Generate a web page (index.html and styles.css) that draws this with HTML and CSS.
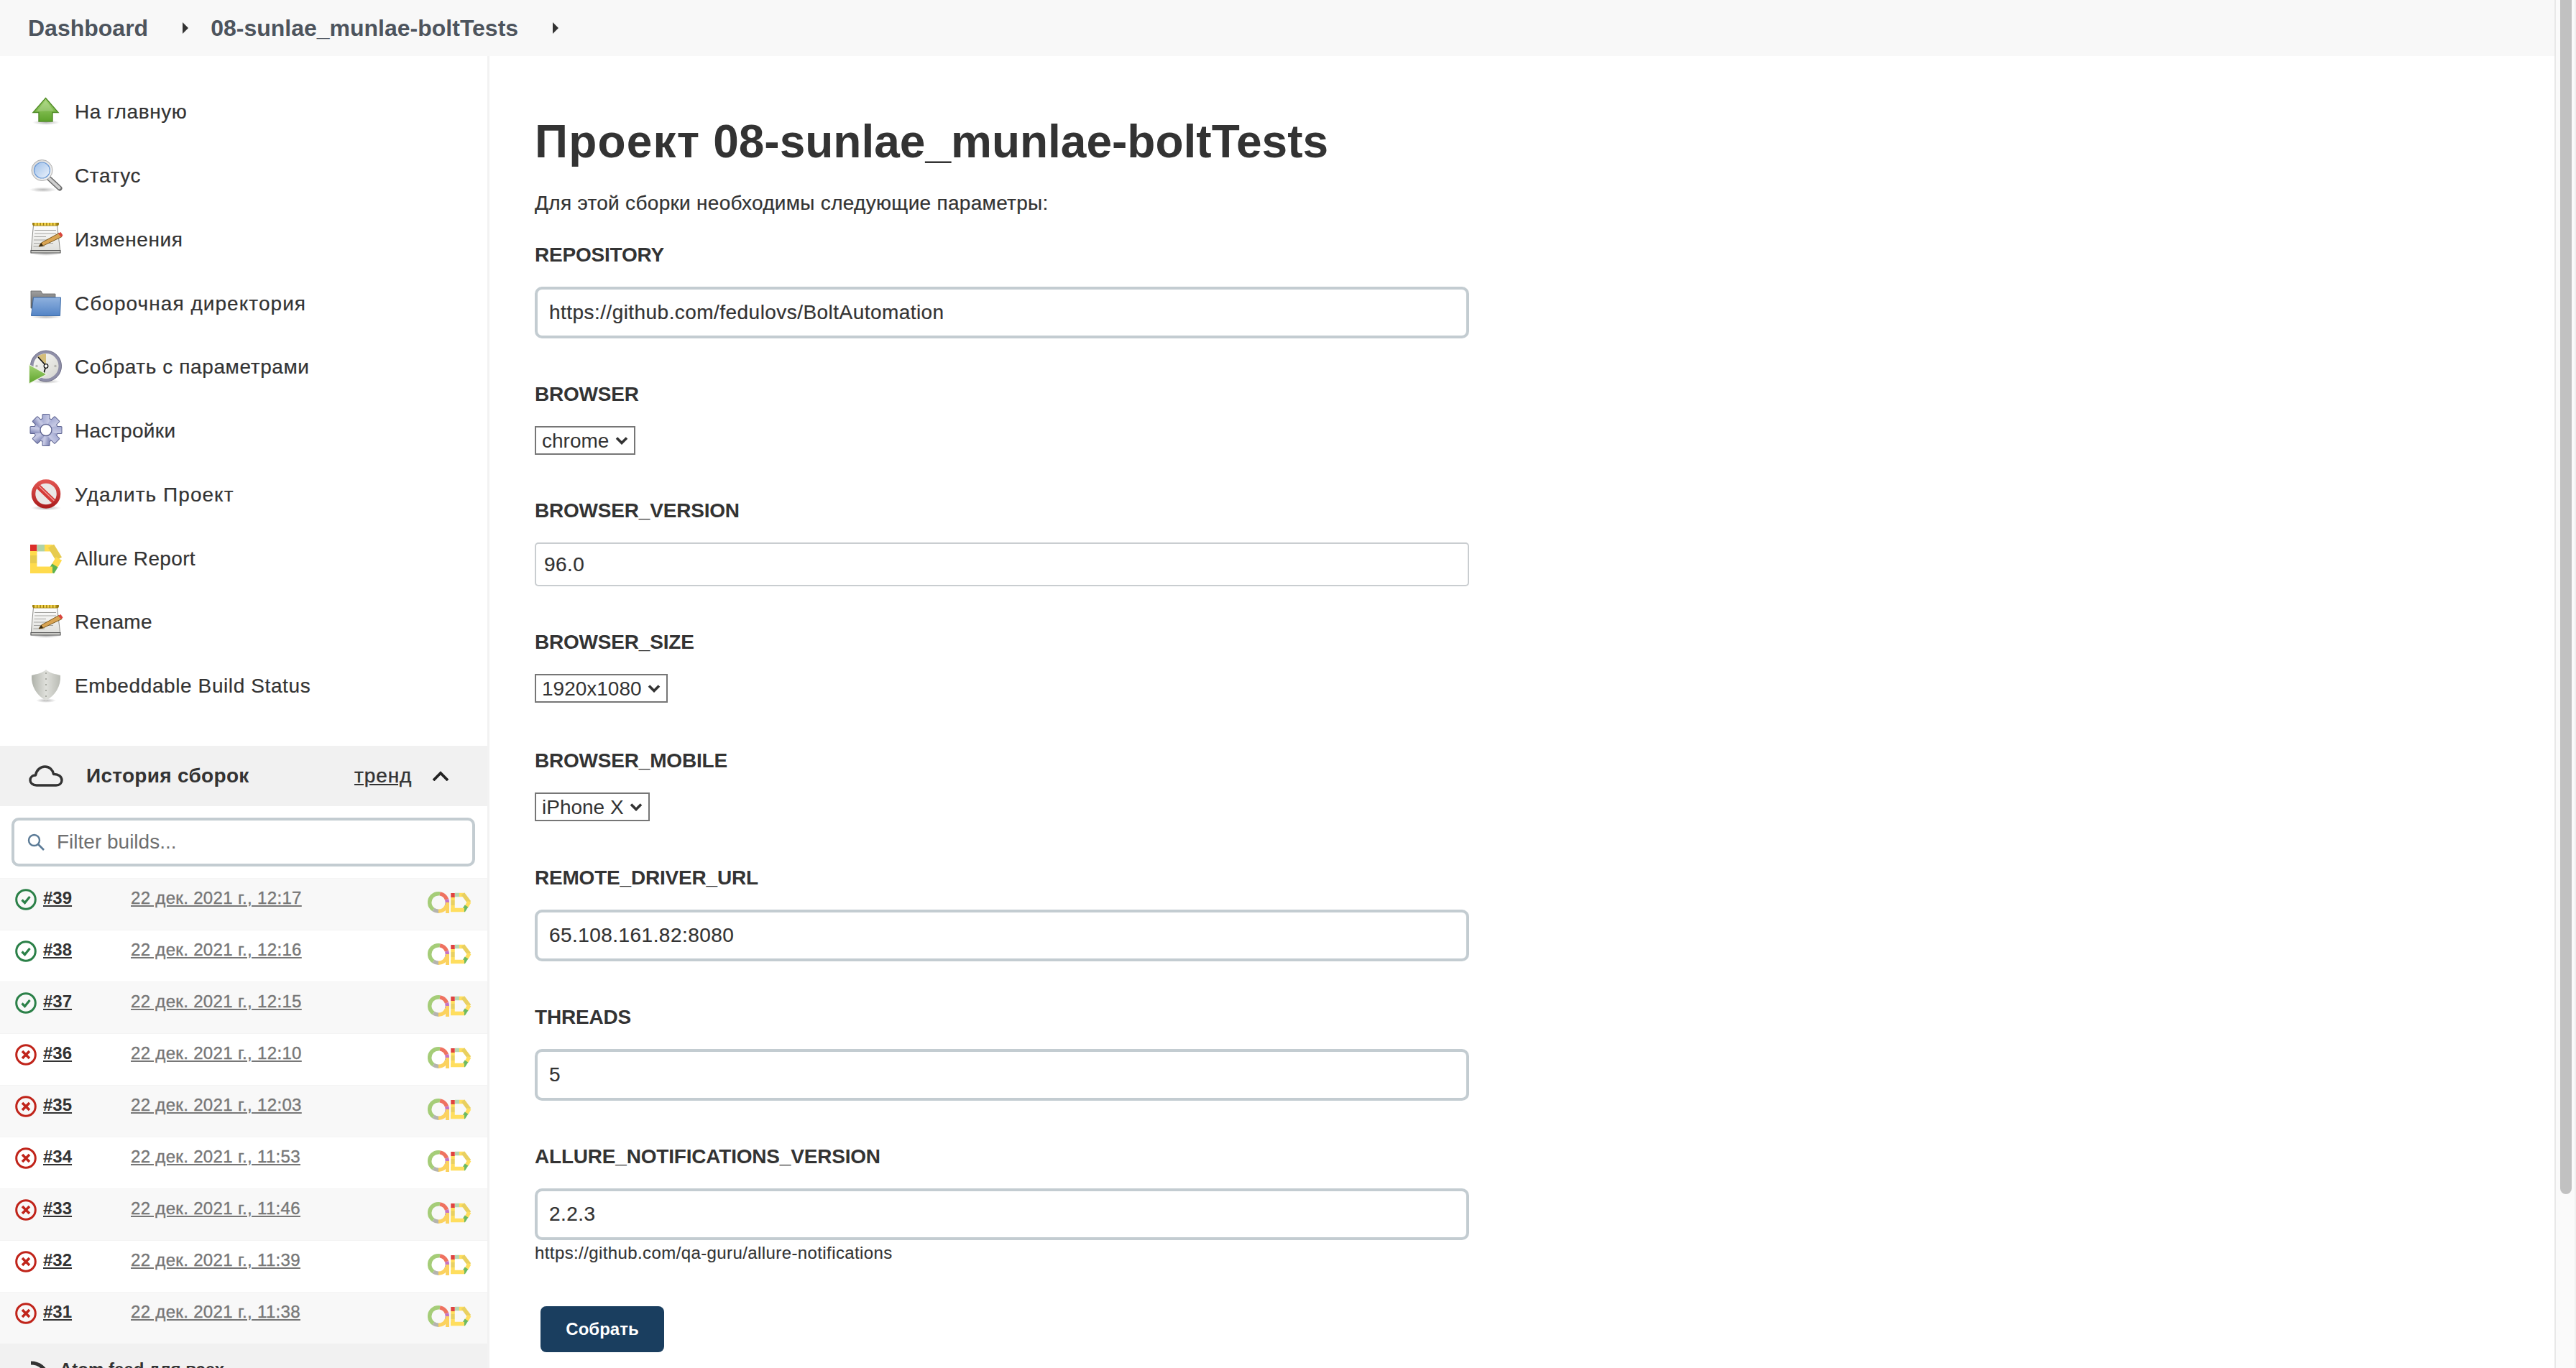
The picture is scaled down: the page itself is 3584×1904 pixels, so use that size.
FILE: index.html
```html
<!DOCTYPE html>
<html lang="ru">
<head>
<meta charset="utf-8">
<title>08-sunlae_munlae-boltTests</title>
<link rel="stylesheet" href="styles.css">
</head>
<body>
<svg class="defs" aria-hidden="true">
  <defs>
    <linearGradient id="gGreen" x1="0" y1="0" x2="0" y2="1"><stop offset="0" stop-color="#a4d474"/><stop offset="1" stop-color="#5da32b"/></linearGradient>
    <linearGradient id="gLens" x1="0" y1="0" x2="1" y2="1"><stop offset="0" stop-color="#9dbfe9"/><stop offset="1" stop-color="#eef4fc"/></linearGradient>
    <linearGradient id="gRim" x1="0" y1="0" x2="1" y2="1"><stop offset="0" stop-color="#d8d8d8"/><stop offset="1" stop-color="#f6f6f6"/></linearGradient>
    <linearGradient id="gPaper" x1="0" y1="0" x2="0" y2="1"><stop offset="0" stop-color="#ffffff"/><stop offset="1" stop-color="#dcdcd8"/></linearGradient>
    <linearGradient id="gFolder" x1="0" y1="0" x2="0" y2="1"><stop offset="0" stop-color="#8fb1de"/><stop offset="1" stop-color="#5384c6"/></linearGradient>
    <linearGradient id="gFolderBack" x1="0" y1="0" x2="0" y2="1"><stop offset="0" stop-color="#a0a0a0"/><stop offset="1" stop-color="#5c5c5c"/></linearGradient>
    <linearGradient id="gFace" x1="0" y1="0" x2="1" y2="1"><stop offset="0" stop-color="#fbfbf8"/><stop offset="1" stop-color="#d4d4cf"/></linearGradient>
    <linearGradient id="gGear" x1="0" y1="0" x2="1" y2="1"><stop offset="0" stop-color="#a5abd3"/><stop offset="0.55" stop-color="#c6c9e4"/><stop offset="1" stop-color="#7d83b4"/></linearGradient>
    <linearGradient id="gStop" x1="0" y1="0" x2="0" y2="1"><stop offset="0" stop-color="#e0534f"/><stop offset="1" stop-color="#ad1f1f"/></linearGradient>
    <linearGradient id="gShield" x1="0" y1="0" x2="1" y2="0"><stop offset="0" stop-color="#aeb1a9"/><stop offset="0.5" stop-color="#dfe0db"/><stop offset="1" stop-color="#b9bbb4"/></linearGradient>
    <radialGradient id="gShadow"><stop offset="0" stop-color="#000" stop-opacity=".28"/><stop offset="1" stop-color="#000" stop-opacity="0"/></radialGradient>

    <symbol id="notepad" viewBox="0 0 48 48">
      <ellipse cx="24" cy="43" rx="21" ry="3" fill="url(#gShadow)"/>
      <path d="M6.500 3.500H39.500L44 41.500H3Z" fill="url(#gPaper)" stroke="#8b8b87" stroke-width="1"/>
      <rect x="3" y="38.500" width="41" height="3.500" fill="#c9c9c5" stroke="#555" stroke-width="1"/>
      <path d="M8 10.500H38M8 15H38M7.500 19.500H24M7 24H36M7 28.500H34M6.500 33H22" stroke="#a3a3a0" stroke-width="1.100" fill="none"/>
      <path d="M8 1.500H39" stroke="#9a7c10" stroke-width="6" stroke-linecap="round"/>
      <path d="M8 1.500H39" stroke="#f0d04a" stroke-width="4.400" stroke-dasharray="3 1.400" fill="none"/>
      <path d="M14 33L17.500 28 42 14.500 46 19.500 20 32Z" fill="#d9a453" stroke="#7c5a1e" stroke-width="1"/>
      <path d="M14 33L17.500 28 20 32Z" fill="#3a2b12"/>
      <path d="M41 15L44.500 13 47.500 17.500 45 20Z" fill="#d9443c"/>
    </symbol>

    <symbol id="allure-d" viewBox="0 0 44 40" preserveAspectRatio="none">
      <g fill="none" stroke-width="9.500">
        <path d="M4.700 0V10" stroke="#db2f2a"/>
        <path d="M9.500 4.700H20" stroke="#aed3a9"/>
        <path d="M20 4.700H31" stroke="#ffdb4d"/>
        <path d="M29 2L40 20" stroke="#e7cb4f"/>
        <path d="M40 19.500L34 30" stroke="#ffdb4d"/>
        <path d="M34.500 29L29 38" stroke="#5db34f"/>
        <path d="M31 35.300H0" stroke="#ffdb4d"/>
        <path d="M4.700 9V15" stroke="#ffdb4d"/>
        <path d="M4.700 15V26" stroke="#e7cb4f"/>
        <path d="M4.700 26V31" stroke="#ffdb4d"/>
      </g>
    </symbol>

    <symbol id="allure-mini" viewBox="0 0 61 32">
      <g fill="none" stroke-width="5.500">
        <circle cx="15" cy="16" r="12.300" pathLength="360" stroke="#a5cd78" stroke-dasharray="155 205" stroke-dashoffset="-215" transform="rotate(-90 15 16)"/>
        <circle cx="15" cy="16" r="12.300" pathLength="360" stroke="#ef7260" stroke-dasharray="60 300" stroke-dashoffset="-10" transform="rotate(-90 15 16)"/>
        <circle cx="15" cy="16" r="12.300" pathLength="360" stroke="#c573c2" stroke-dasharray="40 320" stroke-dashoffset="-70" transform="rotate(-90 15 16)"/>
        <circle cx="15" cy="16" r="12.300" pathLength="360" stroke="#fbd25f" stroke-dasharray="70 290" stroke-dashoffset="-110" transform="rotate(-90 15 16)"/>
        <circle cx="15" cy="16" r="12.300" pathLength="360" stroke="#b4b4ae" stroke-dasharray="35 325" stroke-dashoffset="-180" transform="rotate(-90 15 16)"/>
        <path d="M27.500 16V31" stroke="#fbd25f" stroke-width="5"/>
        <g stroke-width="5.500" opacity=".9">
          <path d="M35 3V9" stroke="#db2f2a"/>
          <path d="M38 5.500H44" stroke="#aed3a9"/>
          <path d="M44 5.500H50" stroke="#ffdb4d"/>
          <path d="M49 4L58 16" stroke="#e7cb4f"/>
          <path d="M58 15L54 22" stroke="#ffdb4d"/>
          <path d="M54 21L49.500 28" stroke="#5db34f"/>
          <path d="M51 26.500H32" stroke="#ffdb4d"/>
          <path d="M35 9V13" stroke="#ffdb4d"/>
          <path d="M35 13V20" stroke="#e7cb4f"/>
          <path d="M35 20V25" stroke="#ffdb4d"/>
        </g>
      </g>
    </symbol>

    <symbol id="st-ok" viewBox="0 0 30 30">
      <circle cx="15" cy="15" r="13.300" fill="none" stroke="#2b8048" stroke-width="3"/>
      <path d="M9.500 15.500L13.500 19.500 20.500 11" fill="none" stroke="#2b8048" stroke-width="3.200"/>
    </symbol>
    <symbol id="st-fail" viewBox="0 0 30 30">
      <circle cx="15" cy="15" r="13.300" fill="none" stroke="#c0241a" stroke-width="3"/>
      <path d="M10 10L20 20M20 10L10 20" fill="none" stroke="#c0241a" stroke-width="3.600"/>
    </symbol>
  </defs>
</svg>

<div class="page">
  <header class="topbar">
    <a class="crumb">Dashboard</a>
    <span class="caret"></span>
    <a class="crumb">08-sunlae_munlae-boltTests</a>
    <span class="caret"></span>
  </header>

  <div class="layout">
    <aside class="sidebar">
      <nav class="tasks">
        <a class="task">
          <svg class="task-icon" viewBox="0 0 48 48"><ellipse cx="24" cy="38.500" rx="19" ry="3.500" fill="url(#gShadow)"/><path d="M23.500 4.500L41 24.500H33V37H14V24.500H6Z" fill="url(#gGreen)" stroke="#4f8a26" stroke-width="1.400"/><path d="M23.500 8L35 22.500H23C19 23 14 23 11 23Z" fill="#fff" opacity=".18"/></svg>
          <span>На главную</span>
        </a>
        <a class="task">
          <svg class="task-icon" viewBox="0 0 48 48"><ellipse cx="20" cy="43" rx="19" ry="3.500" fill="url(#gShadow)"/><path d="M28 27L43 41" stroke="#6d6d6d" stroke-width="7" stroke-linecap="round"/><path d="M29 28L42.500 40.500" stroke="#cfcfcf" stroke-width="4" stroke-linecap="round"/><circle cx="18.500" cy="16" r="14.500" fill="url(#gRim)" stroke="#a9a9a9" stroke-width="1"/><circle cx="18.500" cy="16" r="11" fill="url(#gLens)" stroke="#6b9ad6" stroke-width="1.200"/></svg>
          <span>Статус</span>
        </a>
        <a class="task">
          <svg class="task-icon"><use href="#notepad"/></svg>
          <span>Изменения</span>
        </a>
        <a class="task loose">
          <svg class="task-icon" viewBox="0 0 48 48"><ellipse cx="24" cy="42" rx="22" ry="3" fill="url(#gShadow)"/><path d="M3 6H17L19 10H37V30H3Z" fill="url(#gFolderBack)" stroke="#666" stroke-width=".8"/><path d="M6.500 15H44.500L43.500 40.500H3.500Z" fill="url(#gFolder)" stroke="#3f6da8" stroke-width="1"/></svg>
          <span>Сборочная директория</span>
        </a>
        <a class="task">
          <svg class="task-icon" viewBox="0 0 48 48"><ellipse cx="24" cy="44" rx="20" ry="3" fill="url(#gShadow)"/><circle cx="24" cy="22.500" r="21.500" fill="#8f8fa8" stroke="#6d6d86" stroke-width="1"/><circle cx="24" cy="22.500" r="17.500" fill="url(#gFace)"/><path d="M24 20L12 9.500 A 17 17 0 0 1 24 5.500Z" fill="#d4bd7a"/><path d="M24 22L13 10M24 22L20 36" stroke="#111" stroke-width="1.700" fill="none"/><circle cx="24" cy="22.500" r="2.800" fill="#fff" stroke="#111" stroke-width="1.300"/><circle cx="37" cy="22.500" r="1.700" fill="#b5b5b0"/><circle cx="11" cy="22.500" r="1.700" fill="#b5b5b0"/><path d="M.5 20.500L25 34 .5 47Z" fill="url(#gGreen)" stroke="#eef3e4" stroke-width="1.100"/></svg>
          <span>Собрать с параметрами</span>
        </a>
        <a class="task tight">
          <svg class="task-icon" viewBox="0 0 48 48">
            <g fill="#5f6592"><circle cx="24" cy="22.500" r="17"/><rect x="18.500" y="0" width="11" height="45" rx="1.500"/><rect x="18.500" y="0" width="11" height="45" rx="1.500" transform="rotate(45 24 22.500)"/><rect x="18.500" y="0" width="11" height="45" rx="1.500" transform="rotate(90 24 22.500)"/><rect x="18.500" y="0" width="11" height="45" rx="1.500" transform="rotate(135 24 22.500)"/></g>
            <g fill="url(#gGear)"><circle cx="24" cy="22.500" r="16"/><rect x="19.500" y="1" width="9" height="43" rx="1"/><rect x="19.500" y="1" width="9" height="43" rx="1" transform="rotate(45 24 22.500)"/><rect x="19.500" y="1" width="9" height="43" rx="1" transform="rotate(90 24 22.500)"/><rect x="19.500" y="1" width="9" height="43" rx="1" transform="rotate(135 24 22.500)"/></g>
            <circle cx="24" cy="22.500" r="8" fill="#fff" stroke="#5f6592" stroke-width="1.400"/>
          </svg>
          <span>Настройки</span>
        </a>
        <a class="task loose">
          <svg class="task-icon" viewBox="0 0 48 48"><ellipse cx="24" cy="42" rx="21" ry="3.500" fill="url(#gShadow)"/><circle cx="24" cy="22.500" r="17" fill="#ebe8e6"/><path d="M11 10L37 35" stroke="#d43a36" stroke-width="7"/><path d="M13 10.500L37 33.500" stroke="#f09a96" stroke-width="1.500"/><circle cx="24" cy="22.500" r="17.500" fill="none" stroke="url(#gStop)" stroke-width="5.500"/></svg>
          <span>Удалить Проект</span>
        </a>
        <a class="task tight">
          <svg class="task-icon" viewBox="0 0 48 48"><svg x="2" y="4" width="44" height="40"><use href="#allure-d"/></svg></svg>
          <span>Allure Report</span>
        </a>
        <a class="task tight">
          <svg class="task-icon"><use href="#notepad"/></svg>
          <span>Rename</span>
        </a>
        <a class="task">
          <svg class="task-icon" viewBox="0 0 48 48"><ellipse cx="24" cy="44" rx="14" ry="3" fill="url(#gShadow)"/><path d="M24 1C29 6 37 7 44 9C45 24 37 37 24 44C11 37 3 24 4 9C11 7 19 6 24 1Z" fill="url(#gShield)"/><path d="M24 5V40" stroke="#9c9e96" stroke-width="1.600" stroke-dasharray="2 6"/></svg>
          <span>Embeddable Build Status</span>
        </a>
      </nav>

      <section class="history">
        <div class="history-head">
          <svg class="cloud" viewBox="0 0 48 30"><path d="M11 28C5 28 2 24.500 2 21C2 17 5 14 9.500 14C10.500 7 16 2 22.500 2C29 2 33.500 6.500 34.500 12.500C41 12 46 16 46 21C46 25 43 28 38 28Z" fill="none" stroke="#333" stroke-width="3.400" stroke-linejoin="round"/></svg>
          <span class="history-title">История сборок</span>
          <a class="trend">тренд</a>
          <svg class="chevron" viewBox="0 0 24 14"><path d="M2 13L12 3 22 13" fill="none" stroke="#222" stroke-width="3.800"/></svg>
        </div>
        <div class="filter">
          <svg class="filter-icon" viewBox="0 0 24 24"><circle cx="9.500" cy="9.500" r="7.500" fill="none" stroke="#5a7a96" stroke-width="2.400"/><path d="M15 15L23 23" stroke="#5a7a96" stroke-width="2.600"/></svg>
          <span>Filter builds...</span>
        </div>
        <div class="build odd">
          <svg class="status"><use href="#st-ok"/></svg><a class="build-no">#39</a><a class="build-date">22 дек. 2021 г., 12:17</a>
          <svg class="mini"><use href="#allure-mini"/></svg>
        </div>
        <div class="build">
          <svg class="status"><use href="#st-ok"/></svg><a class="build-no">#38</a><a class="build-date">22 дек. 2021 г., 12:16</a>
          <svg class="mini"><use href="#allure-mini"/></svg>
        </div>
        <div class="build odd">
          <svg class="status"><use href="#st-ok"/></svg><a class="build-no">#37</a><a class="build-date">22 дек. 2021 г., 12:15</a>
          <svg class="mini"><use href="#allure-mini"/></svg>
        </div>
        <div class="build">
          <svg class="status"><use href="#st-fail"/></svg><a class="build-no">#36</a><a class="build-date">22 дек. 2021 г., 12:10</a>
          <svg class="mini"><use href="#allure-mini"/></svg>
        </div>
        <div class="build odd">
          <svg class="status"><use href="#st-fail"/></svg><a class="build-no">#35</a><a class="build-date">22 дек. 2021 г., 12:03</a>
          <svg class="mini"><use href="#allure-mini"/></svg>
        </div>
        <div class="build">
          <svg class="status"><use href="#st-fail"/></svg><a class="build-no">#34</a><a class="build-date">22 дек. 2021 г., 11:53</a>
          <svg class="mini"><use href="#allure-mini"/></svg>
        </div>
        <div class="build odd">
          <svg class="status"><use href="#st-fail"/></svg><a class="build-no">#33</a><a class="build-date">22 дек. 2021 г., 11:46</a>
          <svg class="mini"><use href="#allure-mini"/></svg>
        </div>
        <div class="build">
          <svg class="status"><use href="#st-fail"/></svg><a class="build-no">#32</a><a class="build-date">22 дек. 2021 г., 11:39</a>
          <svg class="mini"><use href="#allure-mini"/></svg>
        </div>
        <div class="build odd">
          <svg class="status"><use href="#st-fail"/></svg><a class="build-no">#31</a><a class="build-date">22 дек. 2021 г., 11:38</a>
          <svg class="mini"><use href="#allure-mini"/></svg>
        </div>
        <div class="feeds">
          <svg class="feed-icon" viewBox="0 0 30 30"><path d="M3 5C14 5 24 12 26 24" fill="none" stroke="#333" stroke-width="5"/></svg>
          <span>Atom feed для всех</span>
        </div>
      </section>
    </aside>

    <main class="main">
      <h1 class="title"><span class="title-word">Проект</span> 08-sunlae_munlae-boltTests</h1>
      <p class="lead">Для этой сборки необходимы следующие параметры:</p>
      <form class="params">
        <div class="param">
          <label class="param-label">REPOSITORY</label>
          <input class="field" type="text" value="https://github.com/fedulovs/BoltAutomation">
        </div>
        <div class="param">
          <label class="param-label">BROWSER</label>
          <select class="choice"><option>chrome</option></select>
        </div>
        <div class="param">
          <label class="param-label">BROWSER_VERSION</label>
          <input class="field plain" type="text" value="96.0">
        </div>
        <div class="param wide-gap">
          <label class="param-label">BROWSER_SIZE</label>
          <select class="choice"><option>1920x1080</option></select>
        </div>
        <div class="param mid-gap">
          <label class="param-label">BROWSER_MOBILE</label>
          <select class="choice"><option>iPhone X</option></select>
        </div>
        <div class="param">
          <label class="param-label">REMOTE_DRIVER_URL</label>
          <input class="field" type="text" value="65.108.161.82:8080">
        </div>
        <div class="param">
          <label class="param-label">THREADS</label>
          <input class="field" type="text" value="5">
        </div>
        <div class="param last">
          <label class="param-label">ALLURE_NOTIFICATIONS_VERSION</label>
          <input class="field" type="text" value="2.2.3">
          <div class="hint">https://github.com/qa-guru/allure-notifications</div>
        </div>
        <button class="submit" type="button">Собрать</button>
      </form>
    </main>
  </div>
</div>

<div class="scrollbar"><div class="thumb"></div></div>
</body>
</html>
```

FILE: styles.css
```css
* { box-sizing: border-box; }

html, body { margin: 0; height: 100%; }

body {
  display: flex;
  height: 1904px;
  overflow: hidden;
  background: #fff;
  color: #333;
  font-family: "Liberation Sans", Arial, sans-serif;
  font-size: 28px;
}

.defs { display: block; width: 0; height: 0; }

.page { flex: 1; min-width: 0; display: flex; flex-direction: column; }

.topbar {
  flex: none;
  height: 78px;
  background: #f8f8f8;
  display: flex;
  align-items: center;
  padding-left: 39px;
}

.crumb { font-size: 32px; font-weight: 700; color: #4d545d; }

.caret {
  width: 0;
  height: 0;
  border-left: 8px solid #333;
  border-top: 8px solid transparent;
  border-bottom: 8px solid transparent;
  margin: 0 31px 0 48px;
}

.layout { flex: 1; min-height: 0; display: flex; }

.sidebar {
  flex: none;
  width: 681px;
  border-right: 3px solid #f2f2f2;
  padding-top: 34px;
  overflow: hidden;
}

.tasks { margin-bottom: 38.5px; }

.task {
  height: 88.75px;
  display: flex;
  align-items: center;
  gap: 16px;
  padding-left: 40px;
  color: #333;
  letter-spacing: .6px;
  -webkit-text-stroke: .2px #333;
}

.task.loose { letter-spacing: 1.05px; }

.task.tight { letter-spacing: .35px; }

.task-icon { flex: none; width: 48px; height: 48px; overflow: visible; }

.history-head {
  height: 84px;
  background: #f1f1f1;
  display: flex;
  align-items: center;
  padding-left: 40px;
}

.cloud { flex: none; width: 48px; height: 30px; }

.history-title { font-weight: 700; margin-left: 32px; width: 373px; letter-spacing: .3px; }

.trend { text-decoration: underline; letter-spacing: .9px; -webkit-text-stroke: .4px #333; }

.chevron { flex: none; width: 24px; height: 14px; margin-left: 28px; }

.filter {
  height: 68px;
  margin: 16px 17px 16px 16px;
  border: 4px solid #c3ccd1;
  border-radius: 10px;
  display: flex;
  align-items: center;
  padding-left: 18px;
  gap: 17px;
  color: #6f6f6f;
}

.filter-icon { flex: none; width: 24px; height: 24px; }

.build {
  height: 72px;
  display: flex;
  align-items: flex-start;
  padding: 14px 0 0 21px;
  border-top: 1px solid #f4f4f4;
  font-size: 24px;
  line-height: 30px;
}

.build.odd { background: #f8f8f8; }

.status { flex: none; width: 30px; height: 30px; }

.build-no {
  width: 122px;
  margin: -2px 0 0 9px;
  font-weight: 700;
  color: #333;
  text-decoration: underline;
}

.build-date {
  flex: 1;
  margin-top: -2px;
  color: #777;
  text-decoration: underline;
  letter-spacing: .33px;
  -webkit-text-stroke: .4px #777;
}

.mini {
  flex: none;
  width: 61px;
  height: 32px;
  margin: 3px 22px 0 0;
  filter: blur(.5px);
}

.feeds {
  height: 60px;
  background: #f1f1f1;
  display: flex;
  align-items: flex-start;
  padding: 22px 0 0 40px;
  gap: 13px;
  font-size: 24px;
  font-weight: 700;
}

.feed-icon { flex: none; width: 30px; height: 30px; }

.main { flex: 1; min-width: 0; padding: 82px 0 0 63px; overflow: hidden; }

.title {
  margin: 0;
  font-size: 64px;
  line-height: 74px;
  font-weight: 700;
  color: #333;
}

.title-word { letter-spacing: 1.2px; }

.lead {
  margin: 33px 0 0;
  line-height: 32px;
  letter-spacing: .3px;
  -webkit-text-stroke: .2px #333;
}

.params { margin-top: 40px; display: flex; flex-direction: column; align-items: flex-start; }

.param { margin-bottom: 62px; display: flex; flex-direction: column; align-items: flex-start; }

.param.wide-gap { margin-bottom: 65px; }

.param.mid-gap { margin-bottom: 63px; }

.param.last { margin-bottom: 0; }

.param-label {
  font-weight: 700;
  line-height: 32px;
  margin-bottom: 28px;
  color: #333;
  letter-spacing: -.2px;
}

.field {
  width: 1300px;
  height: 72px;
  border: 4px solid #c3ccd1;
  border-radius: 10px;
  padding: 0 16px;
  background: #fff;
  color: #333;
  font: 28px "Liberation Sans", Arial, sans-serif;
  letter-spacing: .45px;
  -webkit-text-stroke: .2px #333;
  outline: none;
}

.field.plain {
  height: 61px;
  border: 2px solid #c9cdd0;
  border-radius: 5px;
  padding: 0 11px;
}

.choice {
  appearance: none;
  -webkit-appearance: none;
  height: 40px;
  padding: 0 34px 0 8px;
  border: 2px solid #767676;
  border-radius: 0;
  background-color: #fff;
  background-image: url("data:image/svg+xml,%3Csvg xmlns='http://www.w3.org/2000/svg' viewBox='0 0 18 12'%3E%3Cpath d='M2 2.500L9 9.500 16 2.500' fill='none' stroke='%23333' stroke-width='3.600'/%3E%3C/svg%3E");
  background-repeat: no-repeat;
  background-position: right 8px center;
  background-size: 18px 12px;
  color: #333;
  font: 28px "Liberation Sans", Arial, sans-serif;
}

.hint {
  font-size: 24px;
  line-height: 30px;
  margin-top: 3px;
  letter-spacing: .4px;
  -webkit-text-stroke: .15px #333;
}

.submit {
  width: 172px;
  height: 64px;
  margin: 59px 0 0 8px;
  border: 0;
  border-radius: 8px;
  background: #1a3e5f;
  color: #fff;
  font: 700 24px "Liberation Sans", Arial, sans-serif;
}

.scrollbar {
  flex: none;
  width: 30px;
  background: #fafafa;
  border-left: 2px solid #e8e8e8;
  border-right: 2px solid #f0f0f0;
  padding-left: 6px;
}

.thumb { width: 16px; height: 1662px; background: #c1c1c1; border-radius: 0 0 8px 8px; }
```
